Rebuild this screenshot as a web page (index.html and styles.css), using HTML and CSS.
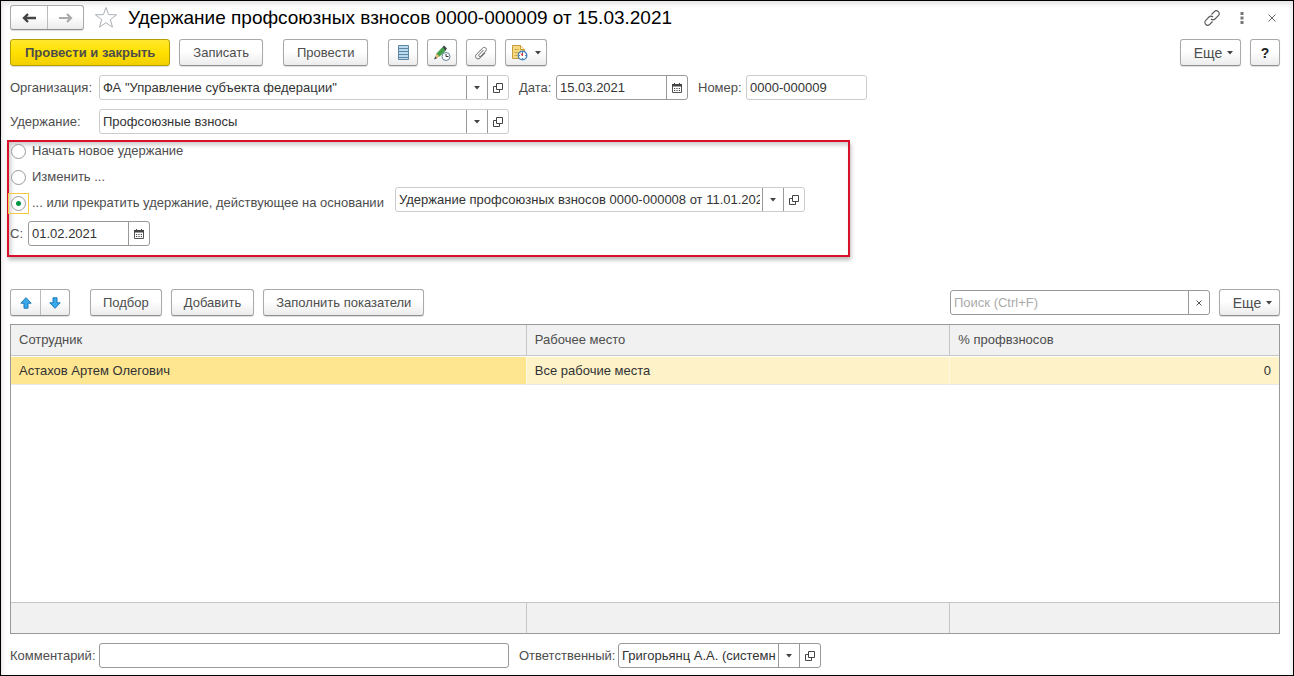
FILE: index.html
```html
<!DOCTYPE html>
<html lang="ru">
<head>
<meta charset="utf-8">
<title>Удержание профсоюзных взносов</title>
<link rel="stylesheet" href="styles.css">
</head>
<body>
<svg class="sprite" aria-hidden="true">
  <symbol id="open" viewBox="0 0 10 10"><path d="M3.500.5h6v6h-6zM3.500 3.500h-3v6h6v-3" fill="none" stroke="#444"/></symbol>
  <symbol id="caret" viewBox="0 0 6 4"><path d="M0 0h6L3 3.500z" fill="#444"/></symbol>
  <symbol id="calendar" viewBox="0 0 10 10"><path d="M.5 2.500h9v7h-9z" fill="#fff" stroke="#555"/><path d="M0 1h10v2.500H0zM2 0h1v2H2zM7 0h1v2H7z" fill="#444"/><path d="M2 5.500h6M2 7.500h6" stroke="#444" stroke-dasharray="1.200 1.200"/></symbol>
</svg>
<main class="window">
  <header class="titlebar">
    <div class="pair nav">
      <button type="button" aria-label="Назад"><svg width="14" height="10" viewBox="0 0 14 10"><path d="M14 5H3M6 1L2 5l4 4" fill="none" stroke="#444" stroke-width="2.400"/></svg></button>
      <button type="button" aria-label="Вперед"><svg width="14" height="10" viewBox="0 0 14 10"><path d="M0 5h11M8 1l4 4-4 4" fill="none" stroke="#aaa" stroke-width="2.200"/></svg></button>
    </div>
    <button type="button" class="plain star" aria-label="В избранное"><svg width="24" height="23" viewBox="0 0 24 23"><path d="M12 1.500l2.600 7.100 8 .2-6.300 4.800 2.200 7.500-6.500-4.400-6.500 4.400 2.200-7.500L1.400 8.800l8-.2z" fill="none" stroke="#aab0b6"/></svg></button>
    <h1>Удержание профсоюзных взносов 0000-000009 от 15.03.2021</h1>
    <div class="window-tools">
      <button type="button" class="plain" aria-label="Ссылка"><svg width="16" height="16" viewBox="0 0 16 16"><path d="M7.500 4.500l2.800-2.800a2.800 2.800 0 0 1 4 4L11 9a2.800 2.800 0 0 1-4 0M8.500 11.500l-2.800 2.800a2.800 2.800 0 0 1-4-4L5 7a2.800 2.800 0 0 1 4 0" fill="none" stroke="#555" stroke-width="1.100"/></svg></button>
      <button type="button" class="plain" aria-label="Меню"><svg width="4" height="12" viewBox="0 0 4 12"><path d="M.5 0h3v3h-3zM.5 4.500h3v3h-3zM.5 9h3v3h-3z" fill="#777"/></svg></button>
      <button type="button" class="plain" aria-label="Закрыть"><svg width="8" height="8" viewBox="0 0 8 8"><path d="M.5.5l7 7M7.500.5l-7 7" stroke="#666"/></svg></button>
    </div>
  </header>

  <div class="toolbar">
    <button type="button" class="btn primary">Провести и закрыть</button>
    <button type="button" class="btn">Записать</button>
    <button type="button" class="btn apart">Провести</button>
    <button type="button" class="btn icon apart" aria-label="Движения"><svg width="11" height="15" viewBox="0 0 11 15"><path d="M.5.5h10v14H.5z" fill="#b9d9ee" stroke="#5d87a5"/><path d="M1 3.500h9M1 6.500h9M1 9.500h9M1 12.500h9" stroke="#5d87a5"/></svg></button>
    <button type="button" class="btn icon" aria-label="Отложенное проведение"><svg width="17" height="16" viewBox="0 0 17 16"><path d="M1 13.500l1.500-5L8.500 2l3.500 3.500-6.500 6z" fill="#43a047"/><path d="M8.500 2L10 .5 13 3.500l-1.500 2z" fill="#3c4146"/><path d="M1 13.500l1.500-5 3 3z" fill="#e8b875"/><path d="M0 14.500l1.200-3 1.800 1.800z" fill="#444"/><circle cx="12" cy="11.500" r="4" fill="#fff" stroke="#5f7f99"/><path d="M12 9v2.500h2.500" fill="none" stroke="#333"/></svg></button>
    <button type="button" class="btn icon" aria-label="Файлы"><svg width="14" height="14" viewBox="0 0 14 14"><path d="M9.500 4L5 8.700c-1 1.300.6 2.700 1.700 1.600l5-5.200c2-2.400-.8-5-3-3L2.500 8.200c-2.600 3 .8 6.400 3.700 3.700l5-5" fill="none" stroke="#666"/></svg></button>
    <button type="button" class="btn icon wide" aria-label="Напоминания"><svg width="16" height="16" viewBox="0 0 16 16"><path d="M.5.5h8l4 4v9H.5z" fill="#f6d980" stroke="#c79d3b"/><path d="M8.500.5v4h4" fill="#fff0bb" stroke="#c79d3b"/><path d="M2.500 4.500h4M2.500 7.500h5M2.500 10.500h3" stroke="#d1a847"/><circle cx="10.500" cy="10.500" r="4.300" fill="#fff" stroke="#4b86bd" stroke-width="1.400"/><path d="M10.500 7v1M10.500 13v1M7 10.500h1M13 10.500h1" stroke="#4b86bd"/><path d="M9 8.500l1.500 2.500V8" fill="none" stroke="#d33a32"/></svg><svg width="6" height="4"><use href="#caret"/></svg></button>
    <div class="end">
      <button type="button" class="btn more">Еще<svg width="6" height="4"><use href="#caret"/></svg></button>
      <button type="button" class="btn icon help" aria-label="Справка">?</button>
    </div>
  </div>

  <div class="row">
    <label class="caption" for="org">Организация:</label>
    <div class="field soft long"><input id="org" type="text" value="ФА &quot;Управление субъекта федерации&quot;"><button type="button" aria-label="Выбрать"><svg width="6" height="4"><use href="#caret"/></svg></button><button type="button" aria-label="Открыть"><svg width="10" height="10"><use href="#open"/></svg></button></div>
    <label class="date-caption" for="date">Дата:</label>
    <div class="field date"><input id="date" type="text" value="15.03.2021"><button type="button" aria-label="Календарь"><svg width="10" height="10"><use href="#calendar"/></svg></button></div>
    <label class="number-caption" for="number">Номер:</label>
    <div class="field soft number"><input id="number" type="text" value="0000-000009"></div>
  </div>
  <div class="row">
    <label class="caption" for="deduction">Удержание:</label>
    <div class="field soft long"><input id="deduction" type="text" value="Профсоюзные взносы"><button type="button" aria-label="Выбрать"><svg width="6" height="4"><use href="#caret"/></svg></button><button type="button" aria-label="Открыть"><svg width="10" height="10"><use href="#open"/></svg></button></div>
  </div>

  <section class="highlight">
    <label class="option"><input type="radio" name="action">Начать новое удержание</label>
    <label class="option"><input type="radio" name="action">Изменить ...</label>
    <div class="basis-row">
      <label class="option current"><input type="radio" name="action" checked>... или прекратить удержание, действующее на основании</label>
      <div class="field soft long"><input type="text" aria-label="Основание" value="Удержание профсоюзных взносов 0000-000008 от 11.01.2021"><button type="button" aria-label="Выбрать"><svg width="6" height="4"><use href="#caret"/></svg></button><button type="button" aria-label="Открыть"><svg width="10" height="10"><use href="#open"/></svg></button></div>
    </div>
    <div class="from-row">
      <label for="from">С:</label>
      <div class="field from"><input id="from" type="text" value="01.02.2021"><button type="button" aria-label="Календарь"><svg width="10" height="10"><use href="#calendar"/></svg></button></div>
    </div>
  </section>

  <div class="toolbar list-tools">
    <div class="pair">
      <button type="button" aria-label="Вверх"><svg width="12" height="12" viewBox="0 0 12 12"><path d="M6 .7l5.200 5.500H8v5H4v-5H.8z" fill="#38a9ec" stroke="#1d79b5"/></svg></button>
      <button type="button" aria-label="Вниз"><svg width="12" height="12" viewBox="0 0 12 12"><path d="M6 11.300L.8 5.800H4v-5h4v5h3.200z" fill="#38a9ec" stroke="#1d79b5"/></svg></button>
    </div>
    <button type="button" class="btn apart">Подбор</button>
    <button type="button" class="btn">Добавить</button>
    <button type="button" class="btn">Заполнить показатели</button>
    <div class="end">
      <div class="field search"><input type="text" aria-label="Поиск" placeholder="Поиск (Ctrl+F)"><button type="button" aria-label="Очистить"><svg width="6" height="6" viewBox="0 0 6 6"><path d="M.5.5l5 5M5.500.5l-5 5" stroke="#555"/></svg></button></div>
      <button type="button" class="btn more">Еще<svg width="6" height="4"><use href="#caret"/></svg></button>
    </div>
  </div>

  <div class="list">
    <table>
      <colgroup><col class="col-person"><col class="col-place"><col></colgroup>
      <thead><tr><th>Сотрудник</th><th>Рабочее место</th><th>% профвзносов</th></tr></thead>
      <tbody>
        <tr class="selected"><td>Астахов Артем Олегович</td><td>Все рабочие места</td><td class="num">0</td></tr>
        <tr class="rest"><td colspan="3"></td></tr>
      </tbody>
      <tfoot><tr><td></td><td></td><td></td></tr></tfoot>
    </table>
  </div>

  <footer class="row">
    <label class="caption" for="comment">Комментарий:</label>
    <div class="field long"><input id="comment" type="text"></div>
    <label class="owner-caption" for="owner">Ответственный:</label>
    <div class="field owner"><input id="owner" type="text" value="Григорьянц А.А. (системный)"><button type="button" aria-label="Выбрать"><svg width="6" height="4"><use href="#caret"/></svg></button><button type="button" aria-label="Открыть"><svg width="10" height="10"><use href="#open"/></svg></button></div>
  </footer>
</main>
</body>
</html>
```
FILE: styles.css
```css
* { box-sizing: border-box; }

body {
  margin: 0;
  background: #fff;
  color: #4d4d4d;
  font: 13px/18px "Liberation Sans", Arial, sans-serif;
}

button, input {
  margin: 0;
  font: inherit;
  color: inherit;
}

button { padding: 0; cursor: pointer; }
svg { display: block; flex: none; }
.sprite { position: absolute; width: 0; height: 0; }

.window {
  display: flex;
  flex-direction: column;
  min-height: 100vh;
  padding: 4px 13px 7px 9px;
  border: 1px solid #000;
  box-shadow: inset 0 5px 5px -2px #e6e4e6, inset 4px 0 4px -2px #eee9ea, inset -4px 0 4px -2px #eee;
}

/* Title */
.titlebar { display: flex; align-items: center; height: 25px; }

h1 {
  margin: 0;
  color: #000;
  font-size: 19px;
  font-weight: 400;
  line-height: 24px;
  white-space: nowrap;
}

.plain {
  display: grid;
  place-items: center;
  border: 0;
  background: none;
}

.star { margin: 0 10px; }
.window-tools { display: flex; align-items: center; gap: 14px; margin-left: auto; }
.window-tools .plain { width: 16px; height: 16px; }

/* Buttons */
.pair {
  display: flex;
  height: 27px;
  border: 1px solid #aaa;
  border-bottom-color: #8f8f8f;
  border-radius: 3px;
  background: linear-gradient(#fff 45%, #ececec);
  box-shadow: 0 1px 1px #ddd;
}

.pair button {
  display: grid;
  place-items: center;
  width: 29px;
  border: 0;
  background: none;
}

.pair button + button { border-left: 1px solid #bbb; }
.nav { height: 25px; }
.nav button { width: 36px; }

.toolbar { display: flex; align-items: center; gap: 9px; margin-top: 9px; }

.btn {
  display: flex;
  align-items: center;
  justify-content: center;
  height: 27px;
  padding: 0 13px;
  border: 1px solid #aaa;
  border-bottom-color: #8f8f8f;
  border-radius: 3px;
  background: linear-gradient(#fff 45%, #ececec);
  box-shadow: 0 1px 1px #ddd;
  white-space: nowrap;
}

.primary {
  padding: 0 14px;
  border-color: #b79e00;
  background: linear-gradient(#ffe92e, #ffe000 50%, #f2cf00);
  font-weight: 700;
}

.apart { margin-left: 11px; }
.icon { width: 30px; padding: 0; }
.wide { width: 42px; gap: 7px; }
.more { width: 61px; gap: 5px; padding: 0 0 0 6px; font-size: 14px; }
.help { color: #222; font-size: 14px; font-weight: 700; }
.end { display: flex; align-items: center; gap: 9px; margin-left: auto; }

/* Fields */
.row { display: flex; align-items: center; margin-top: 9px; }
.caption { width: 89px; }

.field {
  display: flex;
  height: 25px;
  border: 1px solid #999;
  border-radius: 3px;
  background: #fff;
  color: #333;
}

.field input {
  flex: 1;
  min-width: 0;
  padding: 0 2px 0 3px;
  border: 0;
  border-radius: 3px;
  outline: 0;
  background: none;
}

.field button {
  display: grid;
  place-items: center;
  width: 21px;
  border: 0;
  border-left: 1px solid #999;
  background: none;
}

.field input::placeholder { color: #aaa; opacity: 1; }
.soft { border-color: #ccc; }
.long { width: 410px; }
.date { width: 132px; }
.number { width: 121px; }
.from { width: 122px; }
.search { width: 260px; }
.owner { width: 203px; }
.date-caption { width: 47px; padding-left: 10px; }
.number-caption { width: 58px; padding-left: 10px; }
.owner-caption { width: 109px; padding-left: 10px; }

/* Deduction options */
.highlight {
  align-self: flex-start;
  margin: 6px 0 0 -3px;
  padding: 0 43px 9px 1px;
  border: 2px solid #d9102a;
  box-shadow: 1px 3px 4px #bbb, inset 2px 3px 4px #ccc;
}

.option { display: flex; align-items: center; gap: 6px; height: 18px; margin-bottom: 8px; }
.option + .option { margin-bottom: 1px; }

.option input {
  appearance: none;
  width: 15px;
  height: 15px;
  margin-left: 1px;
  border: 1px solid #999;
  border-radius: 50%;
  background: #fff;
}

.option input:checked { background: radial-gradient(circle, #009646 2px, #fff 3px); }
.basis-row { display: flex; align-items: flex-end; }
.basis-row .current { width: 385px; margin: 0; }

/* Focus frame around the chosen option */
.current input { position: relative; }
.current input::after {
  content: "";
  position: absolute;
  inset: -4px;
  border: 1px solid #f5c842;
}

.from-row { display: flex; align-items: center; gap: 5px; margin-top: 9px; }

/* Employee list */
.list-tools { margin-top: 32px; }
.list-tools .btn { padding: 0 12px; }
.list-tools .more { padding: 0 0 0 6px; }
.list { display: grid; flex: 1; margin-top: 8px; }

table {
  width: 100%;
  border: 1px solid #999;
  border-collapse: separate;
  border-spacing: 0;
  table-layout: fixed;
}

.col-person { width: 40.6%; }
.col-place { width: 33.4%; }

th, td { padding: 0 8px; text-align: left; font-weight: 400; }
th { height: 31px; border-bottom: 1px solid #c6c6c6; background: #f1f1f1; }
tfoot td { height: 31px; border-top: 1px solid #c6c6c6; background: #f1f1f1; }
th + th, tfoot td + td { border-left: 1px solid #c6c6c6; }

.selected td {
  height: 29px;
  border-top: 1px solid #fff;
  border-bottom: 1px solid #e8e8e8;
  background: #fdf2c8;
  color: #333;
}

.selected td:first-child { background: #fee590; }
.selected td + td { border-left: 1px solid #fff9e6; }
.selected .num { text-align: right; }
```
